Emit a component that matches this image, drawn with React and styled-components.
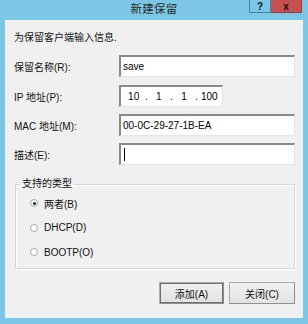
import React from "react";
import styled, { createGlobalStyle } from "styled-components";

const Global = createGlobalStyle`
  html, body {
    margin: 0;
    padding: 0;
    background: #7cc6e6;
  }
  body {
    font-family: "Liberation Sans", "Noto Sans CJK SC", sans-serif;
    font-size: 10px;
    color: #111;
  }
`;

const Window = styled.div`
  width: 308px;
  height: 324px;
  background: #7cc6e6;
  display: flex;
  flex-direction: column;
  box-sizing: border-box;
`;

const TitleBar = styled.div`
  height: 20px;
  display: grid;
  grid-template-columns: 1fr auto 1fr;
  align-items: start;
`;

const Title = styled.div`
  grid-column: 2;
  font-size: 11.5px;
  line-height: 19px;
  color: #2b2b2b;
  letter-spacing: 0.2px;
`;

const Caption = styled.div`
  grid-column: 3;
  justify-self: end;
  display: flex;
  margin-right: 6px;
`;

const CapButton = styled.div`
  height: 13px;
  width: ${(p) => p.$w}px;
  box-sizing: border-box;
  display: flex;
  align-items: center;
  justify-content: center;
  font-weight: bold;
  font-size: 10px;
  color: #111;
  background: ${(p) => (p.$close ? "#c75050" : "#7cc6e6")};
  border: 1px solid ${(p) => (p.$close ? "#9b3c3c" : "#3e88b0")};
  border-top: none;
  & + & {
    border-left: none;
  }
`;

const Panel = styled.div`
  flex: 1;
  margin: 0 5px 6px 5px;
  background: #f0f0f0;
  padding: 11px 8px 9px 9px;
  display: flex;
  flex-direction: column;
`;

const Intro = styled.div`
  line-height: 13px;
  margin-bottom: 11px;
`;

const Row = styled.div`
  display: flex;
  align-items: center;
  height: 22px;
  margin-top: ${(p) => p.$gap || 0}px;
`;

const Label = styled.div`
  width: 105px;
  flex: none;
`;

const Field = styled.div`
  box-sizing: border-box;
  height: 22px;
  width: ${(p) => (p.$w ? `${p.$w}px` : "auto")};
  flex: ${(p) => (p.$w ? "none" : "1")};
  background: #fff;
  border-top: 2px solid #8a8a8a;
  border-left: 2px solid #8a8a8a;
  border-right: 1px solid #e6e6e6;
  border-bottom: 1px solid #e6e6e6;
  padding: 0 2px;
  display: flex;
  align-items: center;
  color: #000;
`;

const Segment = styled.span`
  width: 22px;
  text-align: center;
`;

const Dot = styled.span`
  width: 4px;
  text-align: center;
`;

const Caret = styled.span`
  width: 1px;
  height: 13px;
  background: #000;
  margin-left: 1px;
`;

const Group = styled.fieldset`
  margin: 13px 0 0 1px;
  padding: 1px 0 8px 14px;
  border: 1px solid #d5d5d5;
  box-shadow: inset 1px 1px 0 #fff, 1px 1px 0 #fff;
  height: 91px;
  box-sizing: border-box;
  display: flex;
  flex-direction: column;
`;

const Legend = styled.legend`
  padding: 0 2px;
  margin-left: -10px;
  line-height: 12px;
`;

const RadioRow = styled.label`
  display: flex;
  align-items: center;
  height: 24.5px;
  gap: 6px;
`;

const RadioDot = styled.span`
  width: 8px;
  height: 8px;
  border-radius: 50%;
  box-sizing: border-box;
  border: 1px solid #a9a9a9;
  background: #fff;
  display: flex;
  align-items: center;
  justify-content: center;
  &::after {
    content: "";
    width: 3px;
    height: 3px;
    border-radius: 50%;
    background: ${(p) => (p.$on ? "#222" : "transparent")};
  }
`;

const Footer = styled.div`
  margin-top: 13px;
  display: flex;
  justify-content: flex-end;
  gap: 5px;
`;

const Button = styled.button`
  width: ${(p) => p.$w}px;
  height: 22px;
  font-family: inherit;
  font-size: 10px;
  color: #111;
  background: linear-gradient(#f0f0f0, #e3e3e3);
  border: 1px solid #acacac;
  border-right-color: #8f8f8f;
  border-bottom-color: #8f8f8f;
  box-shadow: ${(p) => (p.$default ? "inset 0 0 0 1px #707070" : "none")};
  padding: 0;
`;

export default function App() {
  return (
    <Window>
      <Global />
      <TitleBar>
        <Title>新建保留</Title>
        <Caption>
          <CapButton $w={22}>?</CapButton>
          <CapButton $w={31} $close>x</CapButton>
        </Caption>
      </TitleBar>
      <Panel>
        <Intro>为保留客户端输入信息.</Intro>
        <Row>
          <Label>保留名称(R):</Label>
          <Field>save</Field>
        </Row>
        <Row $gap={8}>
          <Label>IP 地址(P):</Label>
          <Field $w={104}>
            <Segment>10</Segment>
            <Dot>.</Dot>
            <Segment>1</Segment>
            <Dot>.</Dot>
            <Segment>1</Segment>
            <Dot>.</Dot>
            <Segment>100</Segment>
          </Field>
        </Row>
        <Row $gap={7}>
          <Label>MAC 地址(M):</Label>
          <Field>00-0C-29-27-1B-EA</Field>
        </Row>
        <Row $gap={7}>
          <Label>描述(E):</Label>
          <Field>
            <Caret />
          </Field>
        </Row>
        <Group>
          <Legend>支持的类型</Legend>
          <RadioRow>
            <RadioDot $on />
            两者(B)
          </RadioRow>
          <RadioRow>
            <RadioDot />
            DHCP(D)
          </RadioRow>
          <RadioRow>
            <RadioDot />
            BOOTP(O)
          </RadioRow>
        </Group>
        <Footer>
          <Button $w={65} $default>添加(A)</Button>
          <Button $w={66}>关闭(C)</Button>
        </Footer>
      </Panel>
    </Window>
  );
}
